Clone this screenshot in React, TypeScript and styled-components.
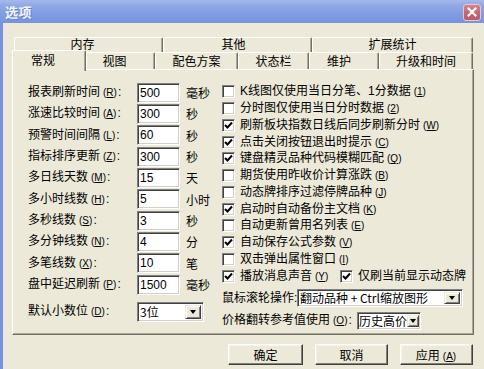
import React from "react";
import styled, { createGlobalStyle } from "styled-components";

const Global = createGlobalStyle`
  html, body { margin: 0; padding: 0; background: #ECE9D8; }
  body {
    font-family: "Liberation Sans", "Noto Sans CJK SC", sans-serif;
    font-size: 12px;
    color: #000;
    overflow: hidden;
  }
  * { box-sizing: border-box; }
`;

const Window = styled.div`
  width: 484px;
  height: 369px;
  display: flex;
  flex-direction: column;
  background: #ECE9D8;
  overflow: hidden;
`;

const TitleBar = styled.div`
  height: 23px;
  flex: none;
  display: flex;
  align-items: center;
  justify-content: space-between;
  padding: 0 3px 0 5px;
  background: linear-gradient(to bottom, #A3B8EC 0%, #8FA8E6 25%, #7F9BE1 65%, #7693DD 100%);
`;

const Title = styled.span`
  font-family: "Noto Sans CJK SC", sans-serif;
  font-weight: 700;
  font-size: 13px;
  color: #F2F5FD;
  letter-spacing: 0.5px;
  text-shadow: 1px 1px 0 #6A84CC;
`;

const CloseBtn = styled.div`
  width: 18px;
  height: 17px;
  margin-top: 1px;
  border-radius: 3px;
  border: 1px solid #E7C6CB;
  background: linear-gradient(to bottom, #CF8690 0%, #C1656F 60%, #B85C66 100%);
  display: flex;
  align-items: center;
  justify-content: center;
`;

const Body = styled.div`
  flex: 1;
  display: flex;
  flex-direction: column;
  border-left: 3px solid #7693DD;
  padding: 14px 0 0 9px;
`;

const TabRow = styled.div<{ $indent: number; $h: number }>`
  display: flex;
  height: ${(p) => p.$h}px;
  margin-left: ${(p) => p.$indent}px;
  position: relative;
`;

const Tab = styled.div<{ $w: number; $selected?: boolean; $shift?: number }>`
  width: ${(p) => p.$w}px;
  height: ${(p) => (p.$selected ? "21px" : "100%")};
  margin-top: ${(p) => (p.$selected ? -2 : 0)}px;
  position: relative;
  z-index: ${(p) => (p.$selected ? 2 : 0)};
  flex: none;
  display: flex;
  align-items: ${(p) => (p.$selected ? "flex-start" : "center")};
  justify-content: center;
  padding-top: ${(p) => (p.$selected ? 2 : 0)}px;
  padding-right: ${(p) => p.$shift ?? 0}px;
  background: #ECE9D8;
  border-top: 1px solid #FFFFFF;
  border-left: 1px solid #FFFFFF;
  border-right: 1px solid #716F64;
  box-shadow: inset -1px 0 0 #ACA899;
  border-radius: 2px 2px 0 0;
  line-height: 16px;
  white-space: nowrap;
`;

const Panel = styled.div`
  width: 462px;
  height: 266px;
  flex: none;
  margin-top: -1px;
  border-top: 1px solid #FFFFFF;
  border-left: 1px solid #FFFFFF;
  border-right: 1px solid #716F64;
  border-bottom: 1px solid #716F64;
  box-shadow: inset -1px -1px 0 #ACA899;
  display: flex;
  position: relative;
  z-index: 1;
`;

const LeftCol = styled.div`
  width: 209px;
  flex: none;
  padding: 12px 0 0 15px;
  display: flex;
  flex-direction: column;
`;

const FieldRow = styled.div<{ $h?: number; $mt?: number }>`
  display: flex;
  align-items: center;
  height: ${(p) => p.$h ?? 21.33}px;
  margin-top: ${(p) => p.$mt ?? 0}px;
`;

const Label = styled.span<{ $w?: number }>`
  ${(p) => (p.$w ? `width: ${p.$w}px; flex: none;` : "")}
  white-space: nowrap;
  line-height: 14px;
`;

const Unit = styled.span`
  margin-left: 6px;
  white-space: nowrap;
`;

const Key = styled.span`
  font-size: 10px;
  margin: 0 1px 0 3px;
`;

const TextBox = styled.input`
  width: 43px;
  height: 20px;
  flex: none;
  padding: 0 2px;
  margin: 0;
  font: inherit;
  font-size: 12px;
  color: #000;
  background: #fff;
  border-style: solid;
  border-width: 1px;
  border-color: #808080 #FFFFFF #FFFFFF #808080;
  box-shadow: inset 1px 1px 0 #404040, inset -1px -1px 0 #D4D0C8;
  outline: none;
`;

const Combo = styled.div<{ $w: number; $h: number; $tight?: boolean }>`
  width: ${(p) => p.$w}px;
  height: ${(p) => p.$h}px;
  flex: none;
  display: flex;
  align-items: center;
  background: #fff;
  border-style: solid;
  border-width: 1px;
  border-color: #808080 #FFFFFF #FFFFFF #808080;
  box-shadow: inset 1px 1px 0 #404040, inset -1px -1px 0 #D4D0C8;
  padding: ${(p) => (p.$tight ? "2px 1px 2px 1px" : "2px")};
`;

const ComboText = styled.span`
  flex: 1;
  min-width: 0;
  white-space: nowrap;
  overflow: hidden;
  font-size: 12px;
  font-family: "Noto Sans CJK SC", sans-serif;
`;

const DropBtn = styled.div<{ $w?: number }>`
  width: ${(p) => p.$w ?? 16}px;
  height: 100%;
  flex: none;
  background: #ECE9D8;
  border-style: solid;
  border-width: 1px;
  border-color: #ECE9D8 #404040 #404040 #ECE9D8;
  box-shadow: inset 1px 1px 0 #FFFFFF, inset -1px -1px 0 #808080;
  display: flex;
  align-items: center;
  justify-content: center;
  &::after {
    content: "";
    width: 0;
    height: 0;
    border-left: 3.5px solid transparent;
    border-right: 3.5px solid transparent;
    border-top: 4px solid #000;
  }
`;

const RightCol = styled.div`
  flex: 1;
  padding: 13.5px 0 0 0;
  display: flex;
  flex-direction: column;
`;

const CheckRow = styled.div`
  display: flex;
  align-items: center;
  height: 16.75px;
`;

const CheckItem = styled.div<{ $w?: number }>`
  display: flex;
  align-items: center;
  gap: 5px;
  ${(p) => (p.$w ? `width: ${p.$w}px; flex: none;` : "")}
  white-space: nowrap;
  line-height: 14px;
`;

const Box = styled.div`
  width: 13px;
  height: 13px;
  flex: none;
  background: #fff;
  border-style: solid;
  border-width: 1px;
  border-color: #808080 #FFFFFF #FFFFFF #808080;
  box-shadow: inset 1px 1px 0 #404040, inset -1px -1px 0 #D4D0C8;
  display: flex;
  align-items: center;
  justify-content: center;
`;

const ButtonRow = styled.div`
  width: 462px;
  display: flex;
  justify-content: flex-end;
  gap: 12px;
  padding-right: 1px;
  margin-top: 9px;
`;

const Button = styled.div<{ $w: number }>`
  width: ${(p) => p.$w}px;
  height: 21px;
  display: flex;
  align-items: center;
  justify-content: center;
  background: #ECE9D8;
  border-style: solid;
  border-width: 1px;
  border-color: #FFFFFF #404040 #404040 #FFFFFF;
  box-shadow: inset -1px -1px 0 #808080, inset 1px 1px 0 #F4F3EE;
  white-space: nowrap;
`;

const K = ({ c }: { c: string }) => (
  <Key>
    (<u>{c}</u>)
  </Key>
);

const Check = ({ on }: { on: boolean }) => (
  <Box>
    {on && (
      <svg width="9" height="9" viewBox="0 0 9 9">
        <polyline points="1,4 3.5,6.5 8,1.5" fill="none" stroke="#000" strokeWidth="2" />
      </svg>
    )}
  </Box>
);

const fields = [
  { l: "报表刷新时间", k: "R", v: "500", u: "毫秒" },
  { l: "涨速比较时间", k: "A", v: "300", u: "秒" },
  { l: "预警时间间隔", k: "L", v: "60", u: "秒" },
  { l: "指标排序更新", k: "Z", v: "300", u: "秒" },
  { l: "多日线天数", k: "M", v: "15", u: "天" },
  { l: "多小时线数", k: "H", v: "5", u: "小时" },
  { l: "多秒线数", k: "S", v: "3", u: "秒" },
  { l: "多分钟线数", k: "N", v: "4", u: "分" },
  { l: "多笔线数", k: "X", v: "10", u: "笔" },
  { l: "盘中延迟刷新", k: "P", v: "1500", u: "毫秒" },
];

const checks = [
  { t: "K线图仅使用当日分笔、1分数据", k: "1", on: false },
  { t: "分时图仅使用当日分时数据", k: "2", on: false },
  { t: "刷新板块指数日线后同步刷新分时", k: "W", on: true },
  { t: "点击关闭按钮退出时提示", k: "C", on: true },
  { t: "键盘精灵品种代码模糊匹配", k: "Q", on: true },
  { t: "期货使用昨收价计算涨跌", k: "B", on: false },
  { t: "动态牌排序过滤停牌品种", k: "J", on: false },
  { t: "启动时自动备份主文档", k: "K", on: true },
  { t: "自动更新曾用名列表", k: "E", on: false },
  { t: "自动保存公式参数", k: "V", on: true },
  { t: "双击弹出属性窗口", k: "I", on: false },
];

export default function App() {
  return (
    <Window>
      <Global />
      <TitleBar>
        <Title>选项</Title>
        <CloseBtn>
          <svg width="10" height="10" viewBox="0 0 10 10">
            <path d="M1.5 1.5 L8.5 8.5 M8.5 1.5 L1.5 8.5" stroke="#fff" strokeWidth="2" strokeLinecap="square" />
          </svg>
        </CloseBtn>
      </TitleBar>
      <Body>
        <TabRow $indent={2} $h={15}>
          <Tab $w={149} $shift={12}>内存</Tab>
          <Tab $w={149} $shift={8}>其他</Tab>
          <Tab $w={161}>扩展统计</Tab>
        </TabRow>
        <TabRow $indent={0} $h={18}>
          <Tab $w={74} $selected $shift={12}>常规</Tab>
          <Tab $w={69} $shift={12}>视图</Tab>
          <Tab $w={83}>配色方案</Tab>
          <Tab $w={71}>状态栏</Tab>
          <Tab $w={70} $shift={10}>维护</Tab>
          <Tab $w={94}>升级和时间</Tab>
        </TabRow>
        <Panel>
          <LeftCol>
            {fields.map((f) => (
              <FieldRow key={f.k}>
                <Label $w={109}>
                  {f.l}
                  <K c={f.k} />:
                </Label>
                <TextBox value={f.v} readOnly />
                <Unit>{f.u}</Unit>
              </FieldRow>
            ))}
            <FieldRow $h={20} $mt={6.7}>
              <Label $w={109}>
                默认小数位
                <K c="D" />:
              </Label>
              <Combo $w={67} $h={20}>
                <ComboText>3位</ComboText>
                <DropBtn />
              </Combo>
            </FieldRow>
          </LeftCol>
          <RightCol>
            {checks.map((c) => (
              <CheckRow key={c.k}>
                <CheckItem>
                  <Check on={c.on} />
                  <span>
                    {c.t}
                    <K c={c.k} />
                  </span>
                </CheckItem>
              </CheckRow>
            ))}
            <CheckRow>
              <CheckItem $w={118}>
                <Check on />
                <span>
                  播放消息声音
                  <K c="Y" />
                </span>
              </CheckItem>
              <CheckItem>
                <Check on />
                <span>仅刷当前显示动态牌</span>
              </CheckItem>
            </CheckRow>
            <FieldRow $h={18} $mt={4.4}>
              <Label $w={75}>鼠标滚轮操作:</Label>
              <Combo $w={166} $h={18}>
                <ComboText>翻动品种 + Ctrl缩放图形</ComboText>
                <DropBtn />
              </Combo>
            </FieldRow>
            <FieldRow $h={18} $mt={5}>
              <Label $w={135}>
                价格翻转参考值使用
                <K c="O" />:
              </Label>
              <Combo $w={64} $h={18} $tight>
                <ComboText>历史高价</ComboText>
                <DropBtn $w={12} />
              </Combo>
            </FieldRow>
          </RightCol>
        </Panel>
        <ButtonRow>
          <Button $w={75}>确定</Button>
          <Button $w={73}>取消</Button>
          <Button $w={73}>
            <span>
              应用
              <K c="A" />
            </span>
          </Button>
        </ButtonRow>
      </Body>
    </Window>
  );
}
